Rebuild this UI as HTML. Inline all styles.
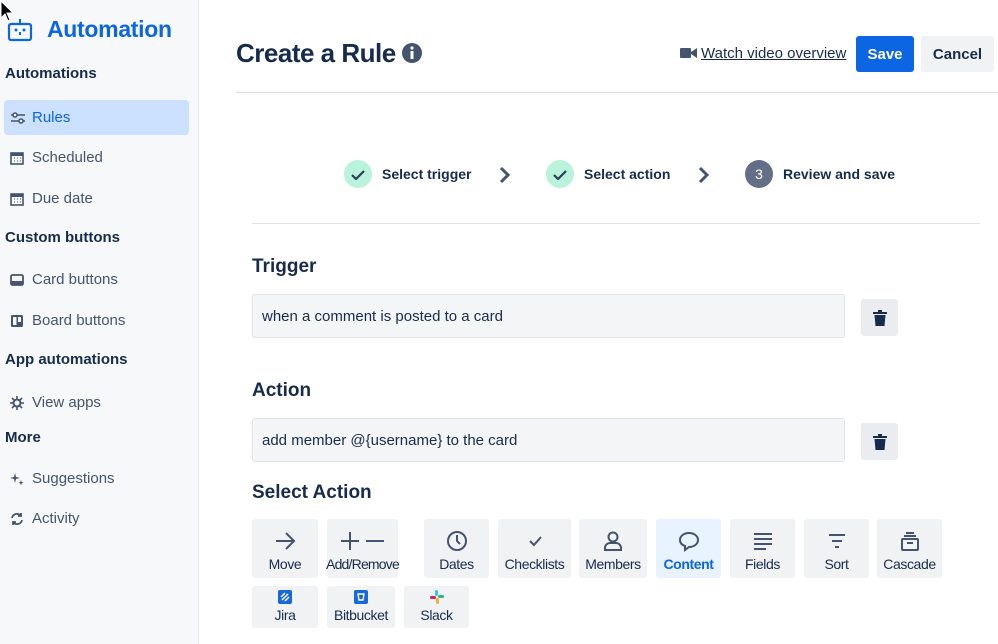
<!DOCTYPE html>
<html><head><style>
*{box-sizing:border-box;margin:0;padding:0}
body{width:998px;height:644px;overflow:hidden;background:#fff;font-family:"Liberation Sans",sans-serif;color:#172b4d;position:relative}
.sb{position:absolute;left:0;top:0;width:199px;height:644px;background:#f7f8f9;border-right:1px solid #ebecf0}
.abs{position:absolute}
.logo{left:47px;top:16px;font-size:23px;font-weight:bold;color:#0c66e4;letter-spacing:-0.3px}
.sh{left:5px;font-size:15px;font-weight:bold;color:#172b4d}
.it{left:4px;width:185px;height:35px;font-size:15px;color:#44546f;display:flex;align-items:center;padding-left:28px}
.it svg{position:absolute;left:6px}
.act{background:#cce0ff;color:#0c66e4;border-radius:4px}
h1{position:absolute;left:236px;top:38px;font-size:26px;font-weight:bold;letter-spacing:-0.5px}
.btn{position:absolute;top:36px;height:36px;border-radius:3px;font-weight:bold;font-size:15px;display:flex;align-items:center;justify-content:center}
.hr{position:absolute;height:1px;background:#dfe1e6}
.step{position:absolute;top:160px;height:28px;display:flex;align-items:center;font-size:14px;font-weight:bold}
.circ{width:28px;height:28px;border-radius:50%;display:flex;align-items:center;justify-content:center;margin-right:10px}
h2{position:absolute;left:252px;font-size:19px;font-weight:bold}
.inp{position:absolute;left:252px;width:593px;height:44px;background:#f4f5f7;border:1px solid #e2e4e9;border-radius:3px;font-size:15px;padding:13px 9px;color:#172b4d}
.tr{position:absolute;left:861px;width:37px;height:37px;background:#ebecf0;border-radius:3px;display:flex;align-items:center;justify-content:center}
.ab{position:absolute;background:#f1f2f4;border-radius:3px;font-size:14px;letter-spacing:-0.4px;color:#172b4d;display:flex;flex-direction:column;align-items:center;justify-content:flex-end;padding-bottom:6px;white-space:nowrap}
.ab svg{margin-bottom:4px}
</style></head><body>
<div class="sb">
 <svg class="abs" style="left:7px;top:18px" width="26" height="24" viewBox="0 0 26 24"><rect x="2" y="6" width="22" height="16" rx="2" fill="none" stroke="#0c66e4" stroke-width="2.2"/><line x1="13" y1="1" x2="13" y2="5" stroke="#0c66e4" stroke-width="2"/><circle cx="9" cy="12" r="1.5" fill="#0c66e4"/><circle cx="17" cy="12" r="1.5" fill="#0c66e4"/><line x1="13" y1="14" x2="13" y2="17" stroke="#0c66e4" stroke-width="2"/></svg>
 <div class="abs logo">Automation</div>
 <div class="abs sh" style="top:65px">Automations</div>
 <div class="abs it act" style="top:100px"><svg width="16" height="16" viewBox="0 0 16 16" stroke="#44546f" stroke-width="1.5" fill="none"><line x1="1" y1="5" x2="15" y2="5"/><line x1="1" y1="11" x2="15" y2="11"/><circle cx="5" cy="5" r="2" fill="#f7f8f9"/><circle cx="11" cy="11" r="2" fill="#f7f8f9"/></svg>Rules</div>
 <div class="abs it" style="top:140px"><svg width="14" height="14" viewBox="0 0 14 14"><rect x="1" y="2" width="12" height="11" fill="none" stroke="#44546f" stroke-width="1.6"/><rect x="1" y="2" width="12" height="3" fill="#44546f"/><path d="M4 7h1M7 7h1M10 7h1M4 10h1M7 10h1M10 10h1" stroke="#44546f"/></svg>Scheduled</div>
 <div class="abs it" style="top:181px"><svg width="14" height="14" viewBox="0 0 14 14"><rect x="1" y="2" width="12" height="11" fill="none" stroke="#44546f" stroke-width="1.6"/><rect x="1" y="2" width="12" height="3" fill="#44546f"/><path d="M4 7h1M7 7h1M10 7h1M4 10h1M7 10h1M10 10h1" stroke="#44546f"/></svg>Due date</div>
 <div class="abs sh" style="top:229px">Custom buttons</div>
 <div class="abs it" style="top:262px"><svg width="14" height="14" viewBox="0 0 14 14"><rect x="1" y="2" width="12" height="10" rx="1.5" fill="none" stroke="#44546f" stroke-width="1.8"/><rect x="1" y="8" width="12" height="4" fill="#44546f"/></svg>Card buttons</div>
 <div class="abs it" style="top:303px"><svg width="14" height="14" viewBox="0 0 14 14"><rect x="1" y="1" width="12" height="12" rx="1.5" fill="#44546f"/><rect x="3" y="3" width="3.5" height="8" fill="#f7f8f9"/><rect x="8" y="3" width="3" height="5" fill="#f7f8f9"/></svg>Board buttons</div>
 <div class="abs sh" style="top:351px">App automations</div>
 <div class="abs it" style="top:385px"><svg width="14" height="14" viewBox="0 0 14 14"><circle cx="7" cy="7" r="3.5" fill="none" stroke="#44546f" stroke-width="2"/><path d="M7 0v3M7 11v3M0 7h3M11 7h3M2 2l2 2M10 10l2 2M12 2l-2 2M2 12l2-2" stroke="#44546f" stroke-width="1.6"/></svg>View apps</div>
 <div class="abs sh" style="top:429px">More</div>
 <div class="abs it" style="top:461px"><svg width="14" height="14" viewBox="0 0 14 14" fill="#44546f"><path d="M5 1l1 4 4 1-4 1-1 4-1-4-4-1 4-1z"/><path d="M11 8l.7 2 2 .7-2 .7-.7 2-.7-2-2-.7 2-.7z"/></svg>Suggestions</div>
 <div class="abs it" style="top:501px"><svg width="14" height="14" viewBox="0 0 14 14" fill="none" stroke="#44546f" stroke-width="1.8"><path d="M2 6a5 5 0 0 1 9-2M12 8a5 5 0 0 1-9 2"/><path d="M11 1v3h-3M3 13v-3h3"/></svg>Activity</div>
</div>
<h1>Create a Rule</h1>
<svg class="abs" style="left:401px;top:42px" width="22" height="22"><circle cx="11" cy="11" r="10" fill="#44546f"/><rect x="9.5" y="9" width="3" height="8" fill="#fff"/><circle cx="11" cy="6" r="1.6" fill="#fff"/></svg>
<svg class="abs" style="left:680px;top:47px" width="17" height="12"><rect x="0" y="1" width="11" height="10" rx="1" fill="#44546f"/><path d="M11 5l6-4v10l-6-4z" fill="#44546f"/></svg>
<div class="abs" style="left:701px;top:45px;font-size:15px;color:#172b4d;text-decoration:underline">Watch video overview</div>
<div class="btn" style="left:856px;width:58px;background:#0c66e4;color:#fff">Save</div>
<div class="btn" style="left:921px;width:73px;background:#f1f2f4;color:#172b4d">Cancel</div>
<div class="hr" style="left:236px;top:92px;width:762px"></div>
<div class="step" style="left:344px"><div class="circ" style="background:#baf3db"><svg width="14" height="11"><path d="M1 6l4 4 8-8" fill="none" stroke="#2c3e5d" stroke-width="2.2"/></svg></div>Select trigger</div>
<svg class="abs" style="left:499px;top:166px" width="12" height="18"><path d="M2 2l7 7-7 7" fill="none" stroke="#44546f" stroke-width="3"/></svg>
<div class="step" style="left:546px"><div class="circ" style="background:#baf3db"><svg width="14" height="11"><path d="M1 6l4 4 8-8" fill="none" stroke="#2c3e5d" stroke-width="2.2"/></svg></div>Select action</div>
<svg class="abs" style="left:698px;top:166px" width="12" height="18"><path d="M2 2l7 7-7 7" fill="none" stroke="#44546f" stroke-width="3"/></svg>
<div class="step" style="left:745px"><div class="circ" style="background:#626f86;color:#fff;font-weight:normal">3</div>Review and save</div>
<div class="hr" style="left:252px;top:223px;width:728px"></div>
<h2 style="top:256px">Trigger</h2>
<div class="inp" style="top:294px">when a comment is posted to a card</div>
<div class="tr" style="top:299px"><svg width="14" height="16" viewBox="0 0 14 16" fill="#172b4d"><rect x="0" y="2" width="14" height="2"/><rect x="5" y="0" width="4" height="2"/><path d="M1.5 5h11l-1 11h-9z"/></svg></div>
<h2 style="top:380px">Action</h2>
<div class="inp" style="top:418px">add member @{username} to the card</div>
<div class="tr" style="top:423px"><svg width="14" height="16" viewBox="0 0 14 16" fill="#172b4d"><rect x="0" y="2" width="14" height="2"/><rect x="5" y="0" width="4" height="2"/><path d="M1.5 5h11l-1 11h-9z"/></svg></div>
<h2 style="top:482px">Select Action</h2>
<div class="ab" style="left:252px;top:519px;width:66px;height:59px"><svg width="22" height="22" fill="none" stroke="#44546f" stroke-width="2"><path d="M2 11h18M12 3l8 8-8 8"/></svg>Move</div>
<div class="ab" style="left:327px;top:519px;width:71px;height:59px;letter-spacing:-0.8px"><svg width="48" height="22" fill="none" stroke="#44546f" stroke-width="2"><path d="M2 11h18M11 2v18M27 11h18"/></svg>Add/Remove</div>
<div class="ab" style="left:424px;top:519px;width:65px;height:59px"><svg width="22" height="22" fill="none" stroke="#44546f" stroke-width="2"><circle cx="11" cy="11" r="9"/><path d="M11 5v6l3 3"/></svg>Dates</div>
<div class="ab" style="left:498px;top:519px;width:73px;height:59px"><svg width="22" height="22" fill="none" stroke="#44546f" stroke-width="2"><path d="M6 11l4 4 7-8"/></svg>Checklists</div>
<div class="ab" style="left:579px;top:519px;width:68px;height:59px"><svg width="22" height="22" fill="none" stroke="#44546f" stroke-width="2"><circle cx="11" cy="7" r="4.5"/><path d="M3 20v-2a5 5 0 0 1 5-5h6a5 5 0 0 1 5 5v2z"/></svg>Members</div>
<div class="ab" style="left:656px;top:519px;width:65px;height:59px;background:#e9f2ff;color:#0c66e4;font-weight:bold"><svg width="22" height="22" fill="none" stroke="#44546f" stroke-width="2"><path d="M11 3c5 0 9 3 9 7s-4 7-9 7l-4 3v-4c-3-1-5-3-5-6 0-4 4-7 9-7z"/></svg>Content</div>
<div class="ab" style="left:730px;top:519px;width:65px;height:59px"><svg width="22" height="22" fill="none" stroke="#44546f" stroke-width="2"><path d="M2 4h18M2 9h18M2 14h18M2 19h12"/></svg>Fields</div>
<div class="ab" style="left:804px;top:519px;width:65px;height:59px"><svg width="22" height="22" fill="none" stroke="#44546f" stroke-width="2"><path d="M3 5h16M6 11h10M9 17h4"/></svg>Sort</div>
<div class="ab" style="left:877px;top:519px;width:65px;height:59px"><svg width="22" height="22" fill="none" stroke="#44546f" stroke-width="2"><rect x="3" y="9" width="16" height="11" rx="1"/><path d="M5 6h12M7 3h8M8 13h6"/></svg>Cascade</div>
<div class="ab" style="left:252px;top:586px;width:66px;height:42px;padding-bottom:5px"><svg width="14" height="14" style="margin-bottom:3px"><rect width="14" height="14" rx="2" fill="#1868db"/><path d="M4 10l6-6M3 7l4-4M7 11l4-4" stroke="#fff" stroke-width="1.5"/></svg>Jira</div>
<div class="ab" style="left:327px;top:586px;width:68px;height:42px;padding-bottom:5px"><svg width="14" height="14" style="margin-bottom:3px"><rect width="14" height="14" rx="2" fill="#1868db"/><path d="M4 4h6l-1 6h-4z" fill="none" stroke="#fff" stroke-width="1.4"/></svg>Bitbucket</div>
<div class="ab" style="left:404px;top:586px;width:65px;height:42px;padding-bottom:5px"><svg width="14" height="14" style="margin-bottom:3px"><rect x="5" y="0" width="3" height="6" rx="1.5" fill="#36c5f0"/><rect x="8" y="5" width="6" height="3" rx="1.5" fill="#2eb67d"/><rect x="6" y="8" width="3" height="6" rx="1.5" fill="#ecb22e"/><rect x="0" y="6" width="6" height="3" rx="1.5" fill="#e01e5a"/></svg>Slack</div>
<svg class="abs" style="left:0;top:0" width="14" height="22"><path d="M1 1v17l4-4 3 7 2-1-3-7h6z" fill="#000" stroke="#fff" stroke-width="1"/></svg>
</body></html>
